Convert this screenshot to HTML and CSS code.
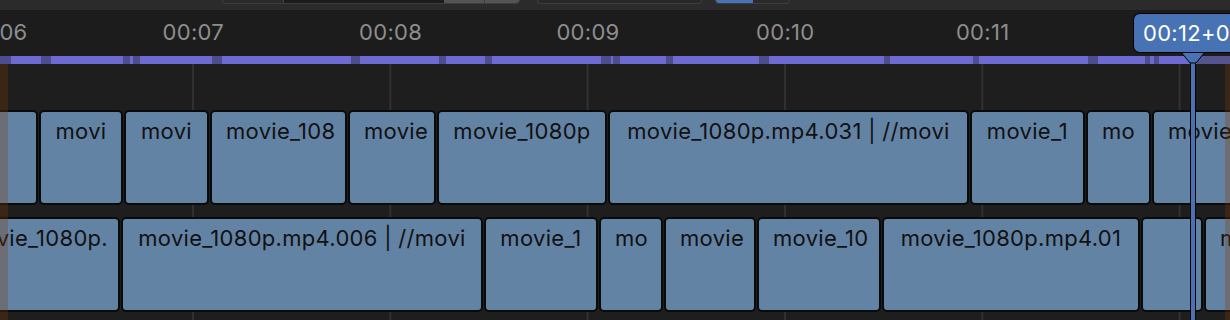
FILE: index.html
```html
<!DOCTYPE html>
<html lang="en">
<head>
  <meta charset="UTF-8" />
  <title>Sequencer Timeline</title>
  <link rel="stylesheet" href="styles.css">
</head>
<body>
  <!-- header widgets, only their bottom edges show -->
  <div class="header">
    <div class="hgroup g1">
      <span class="hseg w61"></span>
      <span class="hfield"></span>
      <span class="hbtn w41"></span>
      <span class="hbtn w36"></span>
    </div>
    <div class="hgroup g2"></div>
    <div class="hgroup g3">
      <span class="hblue"></span>
    </div>
  </div>

  <div class="ruler">
    <div class="ticks">
      <span>00:06</span>
      <span>00:07</span>
      <span>00:08</span>
      <span>00:09</span>
      <span>00:10</span>
      <span>00:11</span>
      <span>00:12</span>
    </div>
  </div>

  <!-- cache line, dark bits sit on strip boundaries -->
  <div class="cache">
    <span class="b" style="width:11px"></span>
    <span class="c" style="width:30px"></span>
    <span class="b" style="width:10px"></span>
    <span class="c" style="width:72px"></span>
    <span class="b" style="width:7px"></span>
    <span class="c" style="width:3px"></span>
    <span class="b" style="width:7px"></span>
    <span class="c" style="width:72px"></span>
    <span class="b" style="width:10px"></span>
    <span class="c" style="width:129px"></span>
    <span class="b" style="width:9px"></span>
    <span class="c" style="width:79px"></span>
    <span class="b" style="width:7px"></span>
    <span class="c" style="width:39px"></span>
    <span class="b" style="width:7px"></span>
    <span class="c" style="width:109px"></span>
    <span class="b" style="width:10px"></span>
    <span class="c" style="width:2px"></span>
    <span class="b" style="width:7px"></span>
    <span class="c" style="width:46px"></span>
    <span class="b" style="width:7px"></span>
    <span class="c" style="width:86px"></span>
    <span class="b" style="width:10px"></span>
    <span class="c" style="width:115px"></span>
    <span class="b" style="width:6px"></span>
    <span class="c" style="width:83px"></span>
    <span class="b" style="width:6px"></span>
    <span class="c" style="width:109px"></span>
    <span class="b" style="width:10px"></span>
    <span class="c" style="width:47px"></span>
    <span class="b" style="width:5px"></span>
    <span class="c" style="width:4px"></span>
    <span class="b" style="width:5px"></span>
    <span class="c" style="width:38px"></span>
    <span class="rest"></span>
  </div>

  <div class="channels">
    <div class="row row-a">
      <div class="strip" style="width:98px"></div>
      <div class="strip" style="width:84px">movi</div>
      <div class="strip" style="width:85px">movi</div>
      <div class="strip" style="width:137px">movie_108</div>
      <div class="strip" style="width:88px">movie</div>
      <div class="strip" style="width:170px">movie_1080p</div>
      <div class="strip" style="width:361px">movie_1080p.mp4.031 | //movi</div>
      <div class="strip" style="width:115px">movie_1</div>
      <div class="strip" style="width:65px">mo</div>
      <div class="strip start" style="width:150px">movie</div>
    </div>
    <div class="row row-b">
      <div class="strip end" style="width:200px">movie_1080p.</div>
      <div class="strip" style="width:362px">movie_1080p.mp4.006 | //movi</div>
      <div class="strip" style="width:114px">movie_1</div>
      <div class="strip" style="width:64px">mo</div>
      <div class="strip" style="width:92px">movie</div>
      <div class="strip" style="width:124px">movie_10</div>
      <div class="strip" style="width:258px">movie_1080p.mp4.01</div>
      <div class="strip" style="width:62px"></div>
      <div class="strip start" style="width:100px">movie</div>
    </div>
  </div>

  <div class="out out-left"></div>
  <div class="out out-right"></div>

  <div class="playhead">
    <div class="ph-line"></div>
    <svg class="ph-tip" width="26" height="12" viewBox="0 0 26 12">
      <polygon points="1,0 25,0 16,11 10,11" fill="#4772b3" stroke="#000" stroke-width="1"/>
      <rect x="8" y="0" width="10" height="1" fill="#4772b3"/>
    </svg>
    <div class="ph-label">00:12+00</div>
  </div>
</body>
</html>
```

FILE: styles.css
```css
* {
  box-sizing: border-box;
}

body {
  margin: 0;
  width: 1230px;
  height: 320px;
  overflow: hidden;
  position: relative;
  background-color: #1e1e1e;
  font-family: Inter, 'DejaVu Sans', sans-serif;
}

/* === HEADER === */
.header {
  height: 10px;
  background-color: #2b2b2b;
  display: flex;
  align-items: flex-start;
}

.hgroup {
  height: 4px;
  display: flex;
  border: 1px solid #3d3d3d;
  border-top: none;
  border-radius: 0 0 5px 5px;
  overflow: hidden;
}

.g1 {
  margin-left: 222px;
  width: 298px;
}

.g2 {
  margin-left: 17px;
  width: 165px;
  background-color: #282828;
}

.g3 {
  margin-left: 13px;
  width: 75px;
}

.hseg.w61 {
  width: 61px;
  border-right: 1px solid #3d3d3d;
}

.hfield {
  width: 160px;
  background-color: #1b1b1b;
}

.hbtn {
  background-color: #545454;
}

.hbtn.w41 {
  width: 41px;
  border-right: 1px solid #3d3d3d;
}

.hbtn.w36 {
  flex: 1;
}

.hblue {
  width: 37px;
  background-color: #4772b3;
}

/* === RULER === */
.ruler {
  height: 46px;
  background-color: #1c1c1c;
  overflow: hidden;
}

.ticks {
  display: flex;
  margin-left: -102.67px;
}

.ticks span {
  flex: 0 0 197.33px;
  text-align: center;
  padding-top: 10px;
  font-size: 22px;
  letter-spacing: 0.3px;
  line-height: 24px;
  color: #8e8e8e;
}

/* === CACHE LINE === */
.cache {
  height: 8px;
  display: flex;
}

.cache .c {
  background-color: #6d6bd1;
}

.cache .b {
  background-color: #4d4c8e;
}

.cache .rest {
  flex: 1;
  background-color: #55548f;
}

/* === CHANNELS + STRIPS === */
.channels {
  height: 256px;
  padding-top: 46px;
  display: flex;
  flex-direction: column;
  gap: 12px;
  background-image: linear-gradient(to right, #313131 2px, transparent 2px);
  background-size: 197.33px 100%;
  background-position: 192px 0;
}

.row {
  height: 95px;
  flex-shrink: 0;
  display: flex;
  gap: 1px;
}

.row-a {
  margin-left: -60px;
}

.row-b {
  margin-left: -80px;
}

.strip {
  flex: none;
  height: 100%;
  background-color: #6383a5;
  border: 2px solid #0a0a0a;
  border-radius: 5px;
  padding: 7px 14px 0;
  font-size: 22px;
  letter-spacing: 0.3px;
  line-height: 24px;
  color: #111;
  text-align: center;
  white-space: nowrap;
  overflow: hidden;
}

.strip.end {
  text-align: right;
  padding-right: 10px;
}

.strip.start {
  text-align: left;
}

/* frame range shading */
.out {
  position: absolute;
  top: 64px;
  bottom: 0;
  background-color: rgba(128, 60, 8, 0.3);
}

.out-left {
  left: 0;
  width: 8px;
}

.out-right {
  left: 1225px;
  right: 0;
}

/* === PLAYHEAD === */
.playhead {
  position: absolute;
  left: 1193px;
  top: 0;
  bottom: 0;
  width: 0;
}

.ph-line {
  position: absolute;
  left: -3px;
  top: 60px;
  bottom: 0;
  width: 6px;
  background-color: #4772b3;
  border: 1px solid #000;
  border-top: none;
  border-bottom: none;
}

.ph-tip {
  position: absolute;
  left: -13px;
  top: 52px;
}

.ph-label {
  position: absolute;
  top: 13px;
  left: -60px;
  width: 120px;
  height: 40px;
  background-color: #4772b3;
  border: 1px solid #000;
  border-radius: 7px;
  padding: 7px 9px;
  color: #fff;
  font-size: 22px;
  letter-spacing: 0.3px;
  line-height: 24px;
  white-space: nowrap;
}
```
